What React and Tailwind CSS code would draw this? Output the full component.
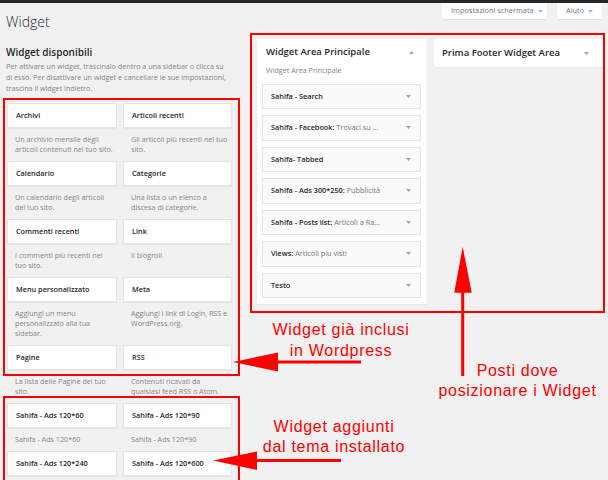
const available = [
  { name: 'Archivi', desc: ['Un archivio mensile degli', 'articoli contenuti nel tuo sito.'] },
  { name: 'Articoli recenti', desc: ['Gli articoli più recenti nel tuo', 'sito.'] },
  { name: 'Calendario', desc: ['Un calendario degli articoli', 'del tuo sito.'] },
  { name: 'Categorie', desc: ['Una lista o un elenco a', 'discesa di categorie.'] },
  { name: 'Commenti recenti', desc: ['I commenti più recenti nel', 'tuo sito.'] },
  { name: 'Link', desc: ['Il blogroll'] },
  { name: 'Menu personalizzato', desc: ['Aggiungi un menu', 'personalizzato alla tua', 'sidebar.'] },
  { name: 'Meta', desc: ['Aggiungi i link di Login, RSS e', 'WordPress.org.'] },
  { name: 'Pagine', desc: ['La lista delle Pagine del tuo', 'sito.'] },
  { name: 'RSS', desc: ['Contenuti ricavati da', 'qualsiasi feed RSS o Atom.'] },
  { name: 'Sahifa - Ads 120*60', desc: ['Sahifa - Ads 120*60'] },
  { name: 'Sahifa - Ads 120*90', desc: ['Sahifa - Ads 120*90'] },
  // last row: descriptions fall below the fold
  { name: 'Sahifa - Ads 120*240', desc: [] },
  { name: 'Sahifa - Ads 120*600', desc: [] },
];

const placed = [
  { name: 'Sahifa - Search' },
  { name: 'Sahifa - Facebook:', extra: 'Trovaci su ...' },
  { name: 'Sahifa- Tabbed' },
  { name: 'Sahifa - Ads 300*250:', extra: 'Pubblicità' },
  { name: 'Sahifa - Posts list:', extra: 'Articoli a Ra...' },
  { name: 'Views:', extra: 'Articoli piu visti' },
  { name: 'Testo' },
];

function Tri({ up = false, color = '#a0a5aa' }) {
  return (
    <svg width="5" height="3" viewBox="0 0 5 3" className="shrink-0">
      <polygon points={up ? '0,3 5,3 2.5,0' : '0,0 5,0 2.5,3'} fill={color} />
    </svg>
  );
}

function Tab({ label, w }) {
  return (
    <div className={`${w} h-[16px] bg-white flex items-center gap-[4px] pl-[9px] shadow-[0_1px_1px_rgba(0,0,0,0.06)]`}>
      <span className="text-[7.4px] leading-none text-[#72777c] whitespace-nowrap">{label}</span>
      <Tri color="#b4b9be" />
    </div>
  );
}

export default function App() {
  return (
    <div className="relative w-[608px] h-[480px] overflow-hidden bg-[#f1f1f1] font-['Open_Sans',sans-serif]">
      <div className="h-[3px] bg-[#23282d]" />

      <div className="flex items-start justify-between px-[6px]">
        <h1 className="mt-[9px] text-[14px] leading-[19px] font-light text-[#23282d]">Widget</h1>
        <div className="flex gap-[10px]">
          <Tab label="Impostazioni schermata" w="w-[105px]" />
          <Tab label="Aiuto" w="w-[45px]" />
        </div>
      </div>

      <div className="flex items-start">
        <div className="ml-[6px] w-[227px]">
          <h2 className="mt-[14px] text-[10px] leading-[14px] font-semibold text-[#23282d]">Widget disponibili</h2>
          <p className="mt-[2px] text-[7.2px] leading-[11.2px] text-[#82878c] whitespace-nowrap">
            Per attivare un widget, trascinalo dentro a una sidebar o clicca su
            <br />
            di esso. Per disattivare un widget e cancellare le sue impostazioni,
            <br />
            trascina il widget indietro.
          </p>
          <div className="mt-[8.4px] pl-[1px] grid grid-cols-[110px_109px] gap-x-[6px]">
            {available.map((w) => (
              <div key={w.name}>
                <div className="h-[25px] bg-white border border-[#e5e5e5] shadow-[0_1px_1px_rgba(0,0,0,0.04)] flex items-center pl-[8px]">
                  <span className="text-[7.3px] font-semibold text-[#23282d] whitespace-nowrap">{w.name}</span>
                </div>
                {w.desc.length > 0 && (
                  <div className="pl-[8px] pt-[6px] pb-[7px] text-[7.2px] leading-[10px] text-[#82878c] whitespace-nowrap">
                    {w.desc.map((l) => (
                      <div key={l}>{l}</div>
                    ))}
                  </div>
                )}
              </div>
            ))}
          </div>
        </div>

        <div className="ml-[24px] mt-[8px] flex items-start gap-[8px]">
          <div className="w-[169px] bg-white shadow-[0_1px_1px_rgba(0,0,0,0.04)] pt-[7px] px-[5px] pb-[6px]">
            <div className="h-[13px] flex items-center justify-between pl-[4px] pr-[7px]">
              <span className="text-[9.5px] font-semibold text-[#23282d] whitespace-nowrap">Widget Area Principale</span>
              <Tri up />
            </div>
            <div className="mt-[5.7px] pl-[4px] text-[7.2px] leading-[10px] text-[#82878c]">Widget Area Principale</div>
            <div className="mt-[9px] flex flex-col gap-[6px]">
              {placed.map((p) => (
                <div key={p.name} className="h-[25.5px] bg-[#fafafa] border border-[#e5e5e5] flex items-center justify-between pl-[8px] pr-[9px]">
                  <span className="text-[7.3px] whitespace-nowrap">
                    <span className="font-semibold text-[#23282d]">{p.name}</span>
                    {p.extra && <span className="text-[#72777c]"> {p.extra}</span>}
                  </span>
                  <Tri />
                </div>
              ))}
            </div>
          </div>

          <div className="w-[169px] h-[28px] bg-white shadow-[0_1px_1px_rgba(0,0,0,0.04)] flex items-center justify-between pl-[8px] pr-[14px]">
            <span className="text-[9.5px] font-semibold text-[#23282d] whitespace-nowrap">Prima Footer Widget Area</span>
            <Tri />
          </div>
        </div>
      </div>

      {/* annotation overlay */}
      <div className="absolute left-[3px] top-[98px] w-[237px] h-[278px] border-2 border-[#ff0000]" />
      <div className="absolute left-[3px] top-[396px] w-[237px] h-[120px] border-2 border-[#ff0000]" />
      <div className="absolute left-[250px] top-[33px] w-[355px] h-[280px] border-2 border-[#ff0000]" />

      <svg className="absolute inset-0 pointer-events-none" width="608" height="480" viewBox="0 0 608 480">
        <polygon points="233,362 278,352.5 278,371.5" fill="#ff0000" />
        <rect x="276" y="360.5" width="85" height="3" fill="#ff0000" />
        <polygon points="213,460.5 257,451.5 257,470" fill="#ff0000" />
        <rect x="255" y="459" width="86" height="3" fill="#ff0000" />
        <polygon points="462.7,246.7 454.3,292.7 471.7,292.7" fill="#ff0000" />
        <rect x="461.2" y="291" width="3" height="85" fill="#ff0000" />
      </svg>

      <div className="absolute left-[241px] top-[319px] w-[200px] text-center text-[16px] leading-[21px] tracking-[0.7px] text-[#ff0000] font-['Liberation_Sans',Arial,sans-serif]">
        Widget già inclusi
        <br />
        in Wordpress
      </div>
      <div className="absolute left-[234px] top-[416.7px] w-[200px] text-center text-[16px] leading-[20px] tracking-[0.7px] text-[#ff0000] font-['Liberation_Sans',Arial,sans-serif]">
        Widget aggiunti
        <br />
        dal tema installato
      </div>
      <div className="absolute left-[417.5px] top-[360.7px] w-[200px] text-center text-[16px] leading-[20px] tracking-[0.7px] text-[#ff0000] font-['Liberation_Sans',Arial,sans-serif] whitespace-nowrap">
        Posti dove
        <br />
        posizionare i Widget
      </div>
    </div>
  );
}
